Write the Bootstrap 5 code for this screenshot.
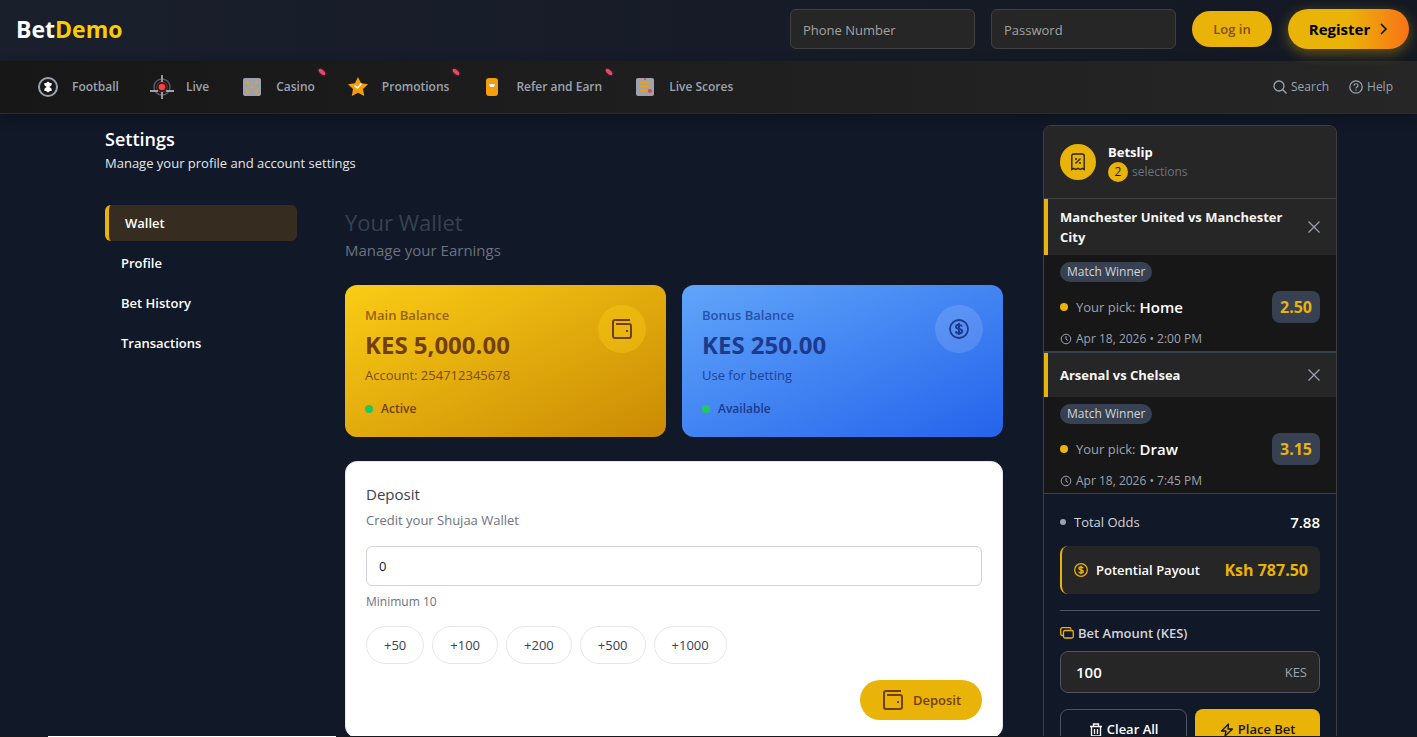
<!DOCTYPE html>
<html lang="en">
<head>
<meta charset="utf-8">
<meta name="viewport" content="width=device-width, initial-scale=1">
<title>BetDemo - Wallet</title>
<link href="https://cdn.jsdelivr.net/npm/bootstrap@5.3.0/dist/css/bootstrap.min.css" rel="stylesheet">
<style>
:root{--gold:#eab308;--ink:#713f12}
html{scrollbar-width:none}
body{background:#111827;color:#fff;font-family:"Open Sans","Noto Sans",sans-serif;font-size:13px;line-height:20px}
a{text-decoration:none}
svg{flex:none;display:block}
.top-bar{background:linear-gradient(90deg,#1a1f2c,#131823);padding:9px 8px 12px 16px}
.brand-name{font-size:23px;line-height:32px;font-weight:700;color:#fff}
.brand-name span{color:#ffcc00}
.field-dark{width:185px;height:40px;background:#262626;border:1px solid #404040;border-radius:6px;color:#fff;font-size:13px;padding:9px 12px 7px}
.field-dark::placeholder{color:#a3a3a3;opacity:1}
.btn-gold{--bs-btn-color:#854d0e;--bs-btn-border-width:0;background:var(--gold);border-radius:20px;font-size:13px;font-weight:600;line-height:20px}
.btn-login{width:80px;height:36px;padding:8px 0}
.btn-register{width:121px;height:40px;padding:8px 0;gap:10px;color:#000;font-weight:700;font-size:15px;background:linear-gradient(90deg,#eab308 50%,#f97316);box-shadow:0 4px 14px rgba(234,179,8,.4)}
.main-nav{background:linear-gradient(90deg,#171717,#262626);border-bottom:1px solid #2e2b22;padding:0 24px 0 20px;height:53px;box-shadow:0 4px 12px rgba(0,0,0,.3)}
.main-nav a{color:#9ca3af;font-size:12px}
.nav-tools{gap:20px}
.nav-entry{position:relative;padding:14px 15px 14px 16px;gap:12px;font-weight:600;line-height:24px}
.hot-mark{position:absolute;top:9px;right:4px;width:8px;height:4px;border-radius:50%;background:#e9476a;transform:rotate(42deg);box-shadow:0 0 3px rgba(244,63,94,.4)}
.page-body{padding:11px 80px 40px 105px;gap:40px}
.settings-title{font-size:18px;line-height:28px;font-weight:600;margin:0}
.sub-line{color:#e5e7eb;line-height:20px;margin-bottom:32px}
.side-menu{width:192px;gap:4px}
.side-menu a{color:#fff;font-weight:600;padding:8px 16px;border-radius:6px;line-height:20px}
.side-menu a.active{background:#362d20;border-left:4px solid var(--gold)}
.wallet-title{font-size:22px;line-height:34px;color:#374151;margin:0;font-weight:400}
.wallet-sub{font-size:15px;line-height:22px;color:#6b7280;margin-bottom:24px}
.balance{border-radius:12px;padding:20px;min-height:152px}
.bal-gold{background:linear-gradient(155deg,#facc15,#ca8a04);color:var(--ink)}
.bal-blue{background:linear-gradient(155deg,#60a5fa,#2563eb);color:#1e3a8a}
.bal-gold .bal-name{color:#966112}
.bal-blue .bal-name{color:#2850a8}
.bal-name{font-weight:600}
.bal-sum{font-size:24px;line-height:32px;font-weight:700;margin:4px 0}
.bal-note{opacity:.9}
.bal-state{font-size:12px;line-height:16px;font-weight:600;margin-top:16px;gap:8px}
.bal-icon{width:48px;height:48px;border-radius:50%;background:rgba(255,255,255,.13)}
.bal-gold .bal-icon{background:rgba(250,204,21,.4)}
.spot{width:8px;height:8px;border-radius:50%;flex:none}
.spot-green{background:#22c55e}
.spot-gold{background:var(--gold)}
.deposit-box{background:#fff;border:1px solid #e5e7eb;border-radius:12px;padding:20px 20px 17px;color:#374151}
.deposit-title{font-size:15px;line-height:24px;font-weight:400;margin:0 0 4px}
.muted-note{color:#6b7280}
.small-note{font-size:12px;line-height:16px}
.deposit-input{height:40px;border:1px solid #d1d5db;border-radius:6px;font-size:13px;padding:8px 12px;color:#111827;background:#fff;width:100%}
.chip-btn{border:1px solid #e5e7eb;border-radius:20px;font-size:13px;line-height:20px;padding:8px 17px;color:#374151;background:#fff}
.btn-deposit{--bs-btn-color:#713f12;width:122px;padding:8px 0;gap:8px;height:40px}
.slip{width:294px;border:1px solid #404040;border-radius:8px;background:#111827;overflow:hidden}
.slip-head{background:#262626;border-bottom:1px solid #404040;padding:16px;gap:12px;height:73px}
.slip-icon{width:36px;height:36px;border-radius:50%;background:var(--gold)}
.count-dot{width:20px;height:20px;border-radius:50%;background:var(--gold);color:#171717;font-size:12px}
.pick{background:#171717}
.pick + .pick{border-top:2px solid #374151}
.pick-head{background:#262626;border-left:4px solid var(--gold);padding:8px 16px 8px 12px;min-height:44px}
.pick-name{font-weight:700;line-height:20px;font-size:13px;margin:0;color:#f5f5f5}
.pick-body{padding:7px 16px 4px;line-height:20px}
.market{background:#374151;color:#d1d5db;border-radius:10px;font-size:12px;line-height:20px;padding:0 7px}
.pick-row{margin-top:9px}
.pick-label{color:#9ca3af}
.pick-choice{font-size:15px;font-weight:600}
.odd{width:48px;height:32px;border-radius:8px;background:#374151;color:var(--gold);font-size:16px;font-weight:700}
.when{font-size:12px;line-height:16px;color:#9ca3af;gap:4px;margin-top:8px}
.close-x{background:none;border:0;padding:0;color:#9ca3af}
.slip-sum{border-top:1px solid #374151;padding:18px 16px 16px}
.total-label{color:#d1d5db}
.total-label::before{content:"";width:6px;height:6px;border-radius:50%;background:#9ca3af}
.payout{background:#262626;border-left:2px solid var(--gold);border-radius:8px;padding:14px 12px;margin-top:14px}
.payout svg{color:var(--gold)}
.payout-sum{color:var(--gold);font-weight:700;font-size:16px}
.slip-line{border-color:#4b5563;opacity:1;margin:16px 0 12px}
.stake-label{color:#d1d5db;font-weight:600;margin-bottom:8px}
.stake-row{background:#262626;border:1px solid #4b5563;border-radius:8px;height:42px;padding:0 12px 0 15px}
.stake-row input{background:none;border:0;color:#fff;font-size:15px;font-weight:600;min-width:0;padding:0;outline:0}
.unit{color:#9ca3af}
.btn-slip{height:42px;border-radius:8px;font-size:13px;font-weight:600;gap:4px;padding:0}
.btn-clear{border:1px solid #4b5563;color:#fff;flex:1 1 50%}
.btn-place{background:var(--gold);color:#171717;flex:1 1 49%}
.edge-strip{height:1px;background:linear-gradient(90deg,#17191d 48px,#fff 48px,#fff 336px,#17191d 336px)}
</style>
</head>
<body>
<svg class="d-none" xmlns="http://www.w3.org/2000/svg">
  <symbol id="wallet" viewBox="0 0 20 20"><path fill="none" stroke="currentColor" stroke-width="2" stroke-linejoin="round" d="M18 1H3q-2 0-2 2v14q0 2 2 2h14q2 0 2-2V7q0-2-2-2H4"/><path fill="currentColor" d="M14 11h2v2h-2z"/></symbol>
  <symbol id="dollar" viewBox="0 0 20 20"><circle cx="10" cy="10" r="9" fill="none" stroke="currentColor" stroke-width="1.8"/><path fill="none" stroke="currentColor" stroke-width="2" d="M13 7.500c-.4-1.300-1.600-1.800-3-1.800-1.700 0-3 .7-3 2.100 0 3 6.200 1.400 6.200 4.400 0 1.300-1.300 2.100-3.200 2.100-1.700 0-3-.7-3.300-2.100M10 4v12"/></symbol>
  <symbol id="cross" viewBox="0 0 12 12"><path stroke="currentColor" stroke-width="1.200" d="M.5.5l11 11m0-11l-11 11"/></symbol>
  <symbol id="clock" viewBox="0 0 12 12"><circle cx="6" cy="6" r="4.800" fill="none" stroke="currentColor"/><path fill="none" stroke="currentColor" d="M6 3v3.200l2 1.300"/></symbol>
</svg>
<header class="top-bar d-flex align-items-center justify-content-between">
  <a href="#" class="brand-name">Bet<span>Demo</span></a>
  <form class="d-flex align-items-center gap-3">
    <input class="field-dark" type="tel" placeholder="Phone Number" aria-label="Phone Number">
    <input class="field-dark" type="password" placeholder="Password" aria-label="Password">
    <button type="button" class="btn btn-gold btn-login">Log in</button>
    <button type="button" class="btn btn-gold btn-register d-flex align-items-center justify-content-center">Register
      <svg width="8" height="12" viewBox="0 0 8 12"><path fill="none" stroke="#000" stroke-width="1.500" d="M1 1l5 5-5 5"/></svg></button>
  </form>
</header>
<nav class="main-nav d-flex align-items-center justify-content-between">
  <div class="d-flex">
    <a href="#" class="nav-entry d-flex align-items-center"><svg width="24" height="24" viewBox="0 0 24 24"><circle cx="12" cy="12" r="9" fill="#171717" stroke="#9ca3af" stroke-width="2"/><path fill="#fff" d="M8 8.500l2.500-.8L12 6.500l1.500 1.200 2.500.8-.8 2.300-2 1.200 2 1.200.8 2.300-2.500.8L12 17.500l-1.500-1.200-2.500-.8.8-2.300 2-1.200-2-1.200z"/></svg>Football</a>
    <a href="#" class="nav-entry d-flex align-items-center"><svg width="24" height="24" viewBox="0 0 24 24"><circle cx="12" cy="12" r="8" fill="none" stroke="#555b65" stroke-width="1.500"/><circle cx="12" cy="12" r="5.300" fill="#271718" stroke="#8f2c2c"/><circle cx="12" cy="12" r="3.300" fill="#ef4444"/><path stroke="#9ca3af" stroke-width="1.800" d="M12 0v7m0 10v7M0 16h8m8 0h8"/></svg>Live</a>
    <a href="#" class="nav-entry d-flex align-items-center"><svg width="24" height="24" viewBox="0 0 24 24"><rect x="3" y="3" width="18" height="18" rx="2" fill="#9ca3af"/><g fill="#f59e0b"><circle cx="7.500" cy="7.500" r="1.500"/><circle cx="16.500" cy="7.500" r="1.500"/><circle cx="12" cy="12" r="1.500"/><circle cx="7.500" cy="16.500" r="1.500"/><circle cx="16.500" cy="16.500" r="1.500"/></g></svg>Casino<span class="hot-mark"></span></a>
    <a href="#" class="nav-entry d-flex align-items-center"><svg width="24" height="24" viewBox="0 0 24 24"><path fill="#f59e0b" d="M12 2l3.100 6.300 6.900 1-5 4.800 1.200 6.900L12 17.800 5.800 21 7 14.100 2 9.300l6.900-1z"/><path fill="none" stroke="#fff" stroke-width="1.600" d="M8.500 10.500l3 2.500 4-4.500"/></svg>Promotions<span class="hot-mark"></span></a>
    <a href="#" class="nav-entry d-flex align-items-center"><svg width="24" height="24" viewBox="0 0 24 24"><rect x="6" y="3" width="12" height="18" rx="3" fill="#f59e0b"/><path fill="#fff" d="M9 9h6l-1 3h-4z"/></svg>Refer and Earn<span class="hot-mark"></span></a>
    <a href="#" class="nav-entry d-flex align-items-center"><svg width="24" height="24" viewBox="0 0 24 24"><rect x="3" y="3" width="18" height="18" rx="2" fill="#9ca3af"/><path stroke="#f59e0b" stroke-width="2" d="M7 7.500h10M7 11.500h10M7 15.500h7"/><circle cx="17" cy="16" r="2" fill="#ef4444"/><circle cx="12" cy="4" r="1" fill="#ef4444"/></svg>Live Scores</a>
  </div>
  <div class="nav-tools d-flex">
    <a href="#" class="d-flex align-items-center gap-1"><svg width="14" height="14" viewBox="0 0 14 14"><circle cx="6" cy="6" r="5" fill="none" stroke="currentColor" stroke-width="1.300"/><path stroke="currentColor" stroke-width="1.400" d="M9.600 9.600L13.500 13.500"/></svg>Search</a>
    <a href="#" class="d-flex align-items-center gap-1"><svg width="14" height="14" viewBox="0 0 14 14"><circle cx="7" cy="7" r="6.200" fill="none" stroke="currentColor" stroke-width="1.300"/><path fill="none" stroke="currentColor" stroke-width="1.200" d="M5 5.700c0-2.600 4-2.600 4 0C9 7 7 7 7 8.500M7 9.500v1.200"/></svg>Help</a>
  </div>
</nav>
<div class="page-body d-flex align-items-start">
  <main class="flex-grow-1">
    <h1 class="settings-title">Settings</h1>
    <p class="sub-line">Manage your profile and account settings</p>
    <div class="d-flex align-items-start gap-5">
      <nav class="side-menu d-flex flex-column flex-shrink-0">
        <a href="#" class="active">Wallet</a><a href="#">Profile</a><a href="#">Bet History</a><a href="#">Transactions</a>
      </nav>
      <section class="flex-grow-1">
        <h2 class="wallet-title">Your Wallet</h2>
        <p class="wallet-sub">Manage your Earnings</p>
        <div class="row g-3 mb-4">
          <div class="col-6"><div class="balance bal-gold d-flex justify-content-between align-items-start">
            <div><div class="bal-name">Main Balance</div><div class="bal-sum">KES 5,000.00</div><div class="bal-note">Account: 254712345678</div>
              <div class="bal-state d-flex align-items-center"><span class="spot spot-green"></span>Active</div></div>
            <div class="bal-icon d-flex align-items-center justify-content-center"><svg width="20" height="20"><use href="#wallet"/></svg></div>
          </div></div>
          <div class="col-6"><div class="balance bal-blue d-flex justify-content-between align-items-start">
            <div><div class="bal-name">Bonus Balance</div><div class="bal-sum">KES 250.00</div><div class="bal-note">Use for betting</div>
              <div class="bal-state d-flex align-items-center"><span class="spot spot-green"></span>Available</div></div>
            <div class="bal-icon d-flex align-items-center justify-content-center"><svg width="20" height="20"><use href="#dollar"/></svg></div>
          </div></div>
        </div>
        <form class="deposit-box">
          <h3 class="deposit-title">Deposit</h3>
          <label for="amount" class="muted-note d-block mb-3">Credit your Shujaa Wallet</label>
          <input id="amount" class="deposit-input" type="text" value="0">
          <div class="muted-note small-note mt-2">Minimum 10</div>
          <div class="d-flex gap-2 my-3">
            <button type="button" class="chip-btn">+50</button><button type="button" class="chip-btn">+100</button><button type="button" class="chip-btn">+200</button><button type="button" class="chip-btn">+500</button><button type="button" class="chip-btn">+1000</button>
          </div>
          <div class="d-flex justify-content-end"><button type="button" class="btn btn-gold btn-deposit d-flex align-items-center justify-content-center"><svg width="24" height="20"><use href="#wallet"/></svg>Deposit</button></div>
        </form>
      </section>
    </div>
  </main>
  <aside class="slip flex-shrink-0">
    <div class="slip-head d-flex align-items-center">
      <div class="slip-icon d-flex align-items-center justify-content-center"><svg width="14" height="18" viewBox="0 0 14 18"><path fill="none" stroke="#262626" stroke-width="1.400" d="M.8 16.500V3Q.8 1 2.800 1h8.400q2 0 2 2v13.500l-2-1.200-2 1.200-2.200-1.200-2.200 1.200-2-1.200z"/><path stroke="#262626" stroke-width="1.400" d="M4.500 10.500l5-5M4 6h2m2 4h2"/></svg></div>
      <div><div class="fw-bold">Betslip</div><div class="d-flex align-items-center gap-1"><span class="count-dot d-flex align-items-center justify-content-center">2</span><span class="muted-note small-note">selections</span></div></div>
    </div>
    <div class="pick">
      <div class="pick-head d-flex align-items-center justify-content-between gap-4"><h4 class="pick-name">Manchester United vs Manchester City</h4><button class="close-x" aria-label="Remove"><svg width="12" height="12"><use href="#cross"/></svg></button></div>
      <div class="pick-body"><div class="d-flex"><span class="market">Match Winner</span></div>
        <div class="pick-row d-flex align-items-center justify-content-between"><div class="d-flex align-items-center"><span class="spot spot-gold me-2"></span><span class="pick-label me-1">Your pick:</span><span class="pick-choice">Home</span></div><span class="odd d-flex align-items-center justify-content-center">2.50</span></div>
        <div class="when d-flex align-items-center"><svg width="12" height="12"><use href="#clock"/></svg>Apr 18, 2026 • 2:00 PM</div></div>
    </div>
    <div class="pick">
      <div class="pick-head d-flex align-items-center justify-content-between gap-4"><h4 class="pick-name">Arsenal vs Chelsea</h4><button class="close-x" aria-label="Remove"><svg width="12" height="12"><use href="#cross"/></svg></button></div>
      <div class="pick-body"><div class="d-flex"><span class="market">Match Winner</span></div>
        <div class="pick-row d-flex align-items-center justify-content-between"><div class="d-flex align-items-center"><span class="spot spot-gold me-2"></span><span class="pick-label me-1">Your pick:</span><span class="pick-choice">Draw</span></div><span class="odd d-flex align-items-center justify-content-center">3.15</span></div>
        <div class="when d-flex align-items-center"><svg width="12" height="12"><use href="#clock"/></svg>Apr 18, 2026 • 7:45 PM</div></div>
    </div>
    <div class="slip-sum">
      <div class="d-flex align-items-center justify-content-between"><span class="d-flex align-items-center gap-2 total-label">Total Odds</span><span class="pick-choice">7.88</span></div>
      <div class="payout d-flex align-items-center justify-content-between"><span class="d-flex align-items-center gap-2 fw-semibold"><svg width="14" height="14"><use href="#dollar"/></svg>Potential Payout</span><span class="payout-sum">Ksh 787.50</span></div>
      <hr class="slip-line">
      <label for="stake" class="d-flex align-items-center gap-1 stake-label"><svg width="14" height="12" viewBox="0 0 14 12"><g fill="none" stroke="#eab308" stroke-width="1.300"><path d="M3.500 8.500H2.500Q.7 8.500.7 6.700V2.500Q.7.700 2.500.700h7Q11 .7 11 2.500"/><rect x="3.500" y="3.500" width="9.800" height="7.500" rx="1.500"/></g></svg>Bet Amount (KES)</label>
      <div class="stake-row d-flex align-items-center"><input id="stake" class="flex-grow-1" type="text" value="100"><span class="unit">KES</span></div>
      <div class="d-flex gap-2 mt-3">
        <button class="btn btn-slip btn-clear d-flex align-items-center justify-content-center"><svg width="14" height="14" viewBox="0 0 14 14"><path fill="none" stroke="#fff" stroke-width="1.300" d="M1 3.500h12M4.500 3.500V1h5v2.500M2.500 3.500V13h9V3.500M5.500 6v5m3-5v5"/></svg>Clear All</button>
        <button class="btn btn-slip btn-place d-flex align-items-center justify-content-center"><svg width="14" height="14" viewBox="0 0 14 14"><path fill="none" stroke="#171717" stroke-width="1.300" stroke-linejoin="round" d="M8.500 1L1.500 8H6l-1 5 7.500-7H8z"/></svg>Place Bet</button>
      </div>
    </div>
  </aside>
</div>
<div class="edge-strip fixed-bottom"></div>
<script src="https://cdn.jsdelivr.net/npm/bootstrap@5.3.0/dist/js/bootstrap.bundle.min.js"></script>
</body>
</html>
